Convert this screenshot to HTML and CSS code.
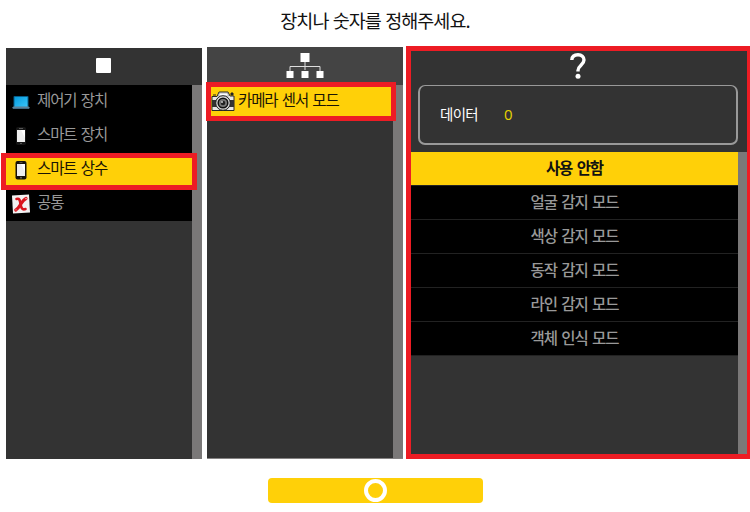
FILE: index.html
```html
<!DOCTYPE html>
<html lang="ko">
<head>
<meta charset="utf-8">
<title>장치 선택</title>
<link rel="stylesheet" href="styles.css">
</head>
<body>
<h1 class="title">장치나 숫자를 정해주세요.</h1>
<main class="panels">
  <section class="panel devices">
    <header class="head"><svg width="15" height="15" viewBox="0 0 15 15"><rect width="15" height="15" rx="1" fill="#fff"/></svg></header>
    <div class="body">
      <ul class="list">
        <li class="item">
          <svg class="icon" width="18" height="20" viewBox="0 0 18 20"><defs><linearGradient id="lcd" x2="1" y2="1"><stop stop-color="#079bdc"/><stop offset="1" stop-color="#38c4fa"/></linearGradient></defs><rect x="1.5" y="4" width="15" height="11" rx="1" fill="#075f8b"/><rect x="2.5" y="5" width="13" height="9.5" fill="url(#lcd)"/><path d="M0 15h18l-1 2H1z" fill="#416983"/><path d="M1 15h16" stroke="#a6bdc9" stroke-width=".6"/></svg>
          <span>제어기 장치</span></li>
        <li class="item">
          <svg class="icon" width="18" height="20" viewBox="0 0 18 20"><rect x="4" y="1" width="10" height="18" rx="2" fill="#161616"/><rect x="5" y="4" width="8" height="12" fill="#eee"/><path d="M13 4v8L9 4z" fill="#fff"/><path d="M7 2.5h4M8 17.5h2" stroke="#555"/></svg>
          <span>스마트 장치</span></li>
        <li class="item selected">
          <svg class="icon" width="18" height="20" viewBox="0 0 18 20"><rect x="3.5" y="1" width="11" height="18.5" rx="2" fill="#17120b"/><rect x="5" y="4" width="8" height="12" fill="#eee"/><path d="M13 4v8L9 4z" fill="#fff"/><path d="M7.5 2.5h3" stroke="#776c58" stroke-width=".7"/><circle cx="9" cy="17.7" r=".9" fill="#776c58"/></svg>
          <span>스마트 상수</span></li>
        <li class="item">
          <svg class="icon" width="18" height="20" viewBox="0 0 18 20"><path d="M0 1.500 17 .5 18 18.500 1 19.500z" fill="#f3f1f1"/><path d="M4.500 5c3.500-1 3.500 2 4 5s1.500 6.500 5 5" fill="none" stroke="#d9151e" stroke-width="2.600" stroke-linecap="round"/><path d="M14 4.500C11 6 10 8 8.500 10.500S6 15 3.800 16" fill="none" stroke="#d9151e" stroke-width="3.200" stroke-linecap="round"/><circle cx="14" cy="4.500" r=".8" fill="#f6b4b7"/><circle cx="4" cy="15.800" r=".6" fill="#f6b4b7"/></svg>
          <span>공통</span></li>
      </ul>
      <div class="scroll"></div>
    </div>
    <div class="mark mark-device"></div>
  </section>
  <section class="panel modes">
    <header class="head"><svg width="38" height="26" viewBox="0 0 38 26"><path d="M19 9v8M4 18v-4.500h30V18" fill="none" stroke="#ddd"/><path d="M14.500 0h9v9h-9zM.5 18h7v7h-7zM15.500 18h7v7h-7zM30.500 18h7v7h-7z" fill="#fff"/></svg></header>
    <div class="body">
      <ul class="list">
        <li class="item selected">
          <svg class="camera" width="24" height="21" viewBox="0 0 24 21"><path d="M1 5.500h5L8 1h9l2 4h4v14.500H1z" fill="#e8e8e8" stroke="#292929"/><path d="M8.500 2h8l1 3H7.500z" fill="#fff" stroke="#777" stroke-width=".5"/><path d="M1 9h6v7H1zM18 9h5v7h-5z" fill="#333"/><path d="M2 4h3M20 2h2v2h-2z" stroke="#222" fill="#222"/><circle cx="12" cy="12" r="7.300" fill="#ddd" stroke="#222"/><circle cx="12" cy="12" r="4.800" fill="#777" stroke="#111" stroke-width="1.500"/><circle cx="12" cy="12" r="2.300" fill="#222"/><circle cx="11" cy="11" r="1" fill="#ccc"/></svg>
          <span>카메라 센서 모드</span></li>
      </ul>
      <div class="scroll"></div>
    </div>
    <div class="mark mark-mode"></div>
  </section>
  <section class="panel values">
    <header class="values-head">
      <svg class="question" width="16" height="26" viewBox="0 0 16 26"><path d="M1.800 7C2 3.500 4.500 1.800 8 1.800c3.700 0 6 2 6 5.200 0 5-6 5.500-6 10.500v1" fill="none" stroke="#fff" stroke-width="3.400"/><circle cx="8" cy="23.300" r="2.500" fill="#fff"/></svg>
      <div class="data"><span>데이터</span><span class="number">0</span></div>
    </header>
    <div class="body">
      <ul class="list options">
        <li class="option chosen">사용 안함</li>
        <li class="option">얼굴 감지 모드</li>
        <li class="option">색상 감지 모드</li>
        <li class="option">동작 감지 모드</li>
        <li class="option">라인 감지 모드</li>
        <li class="option">객체 인식 모드</li>
      </ul>
      <div class="scroll"></div>
    </div>
  </section>
</main>
<button class="confirm" aria-label="확인"><svg width="23" height="23" viewBox="0 0 23 23"><circle cx="11.500" cy="11.500" r="9.500" fill="none" stroke="#fff" stroke-width="4"/></svg></button>
</body>
</html>
```
FILE: styles.css
```css
* { box-sizing: border-box; }
body {
  margin: 0;
  width: 750px;
  height: 512px;
  overflow: hidden;
  background: #fff;
  font-family: "Noto Sans CJK KR", sans-serif;
}
.title {
  margin: 0;
  height: 46px;
  line-height: 41px;
  text-align: center;
  font-size: 18.5px;
  font-weight: 400;
  letter-spacing: -0.95px;
  color: #111;
}
.panels {
  display: grid;
  grid-template-columns: 196px 196px 344px;
  column-gap: 5px;
  padding-left: 6px;
  height: 413px;
}
.panel {
  position: relative;
  display: flex;
  flex-direction: column;
  background: #333;
}
.devices { margin-top: 2px; }
.modes { margin: 1px 0 0; border-bottom: 1px solid #858383; }
.head {
  display: flex;
  justify-content: center;
  align-items: center;
  height: 37px;
  flex: none;
}
.modes .head { height: 38px; background: #444; }
.modes .head svg { margin-top: -1px; }
.devices .head { padding-right: 1px; }
.devices .head svg { margin-top: -2px; }
.body { display: flex; flex: 1; }
.list {
  flex: 1;
  margin: 0;
  padding: 0;
  list-style: none;
}
.scroll { width: 10px; background: #7a7878; }
.item {
  display: flex;
  align-items: center;
  height: 34px;
  padding-left: 6px;
  gap: 7px;
  background: #000;
  color: #999;
  font-size: 15.5px;
  letter-spacing: -1.1px;
  word-spacing: 1px;
  line-height: 30px;
}
.item span { margin-top: -6px; white-space: nowrap; }
.selected { background: #ffd008; color: #1a1505; }
.modes .item { padding-left: 4px; gap: 3px; }
.modes .item span { margin-top: -7px; }
.camera { margin-top: -1px; }
.mark { position: absolute; border: 5px solid #ed1c24; }
.mark-device { left: -5px; top: 105px; width: 196px; height: 37px; }
.mark-mode { left: -1px; top: 35px; width: 190px; height: 39px; }
.values {
  width: 344px;
  margin-left: -2px;
  border: 5px solid #ed1c24;
  border-right-width: 3px;
}
.values-head {
  display: flex;
  flex-direction: column;
  align-items: center;
  height: 101px;
  padding: 2px 9px 0 7px;
}
.question { flex: none; }
.data {
  display: flex;
  align-items: center;
  align-self: stretch;
  height: 60px;
  margin-top: 6px;
  padding: 0 0 2px 20px;
  border: 2px solid #999;
  border-top-width: 1px;
  border-radius: 7px;
  color: #fff;
  font-size: 14.5px;
  letter-spacing: -0.7px;
}
.data span { width: 64px; }
.data .number {
  color: #e8d400;
  font-family: "Open Sans", sans-serif;
  font-size: 15px;
}
.values .scroll { width: 9px; }
.option {
  height: 34px;
  line-height: 30px;
  text-align: center;
  background: #000;
  border-bottom: 1px solid #222;
  color: #999;
  font-size: 15.5px;
  font-weight: 500;
  letter-spacing: -1.1px;
  word-spacing: 1.2px;
}
.chosen { background: #ffd008; color: #111; font-weight: 700; }
.confirm {
  display: flex;
  justify-content: center;
  align-items: center;
  width: 215px;
  height: 25px;
  margin: 19px 0 0 268px;
  padding: 0;
  border: 0;
  border-radius: 4px;
  background: #ffd008;
}
```
